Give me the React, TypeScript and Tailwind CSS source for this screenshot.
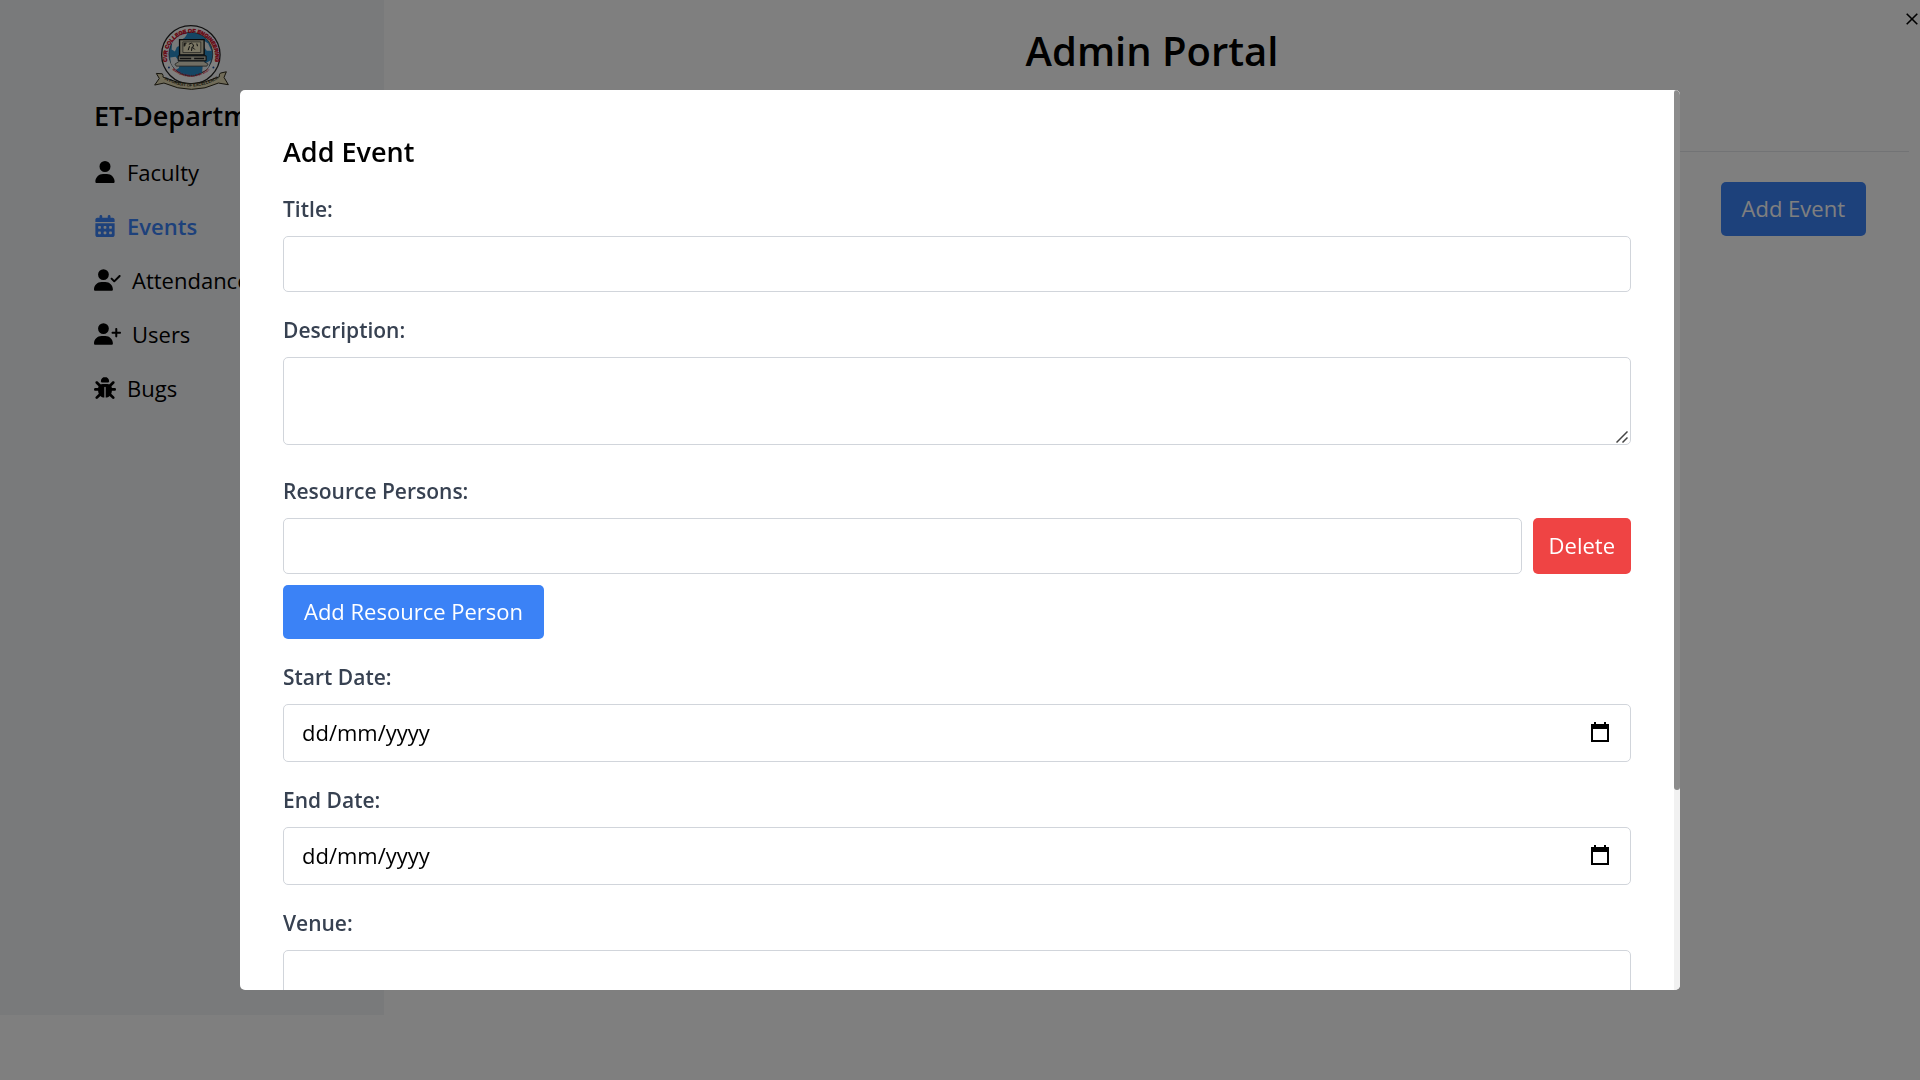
import React from "react";
import { FaUser, FaCalendarDays, FaUserCheck, FaUserPlus, FaBug } from "react-icons/fa6";

const fieldClass =
  "block w-full rounded-[5px] border border-[#d1d5db] bg-white px-[18px] text-[22px] leading-[32px] text-black placeholder:text-black placeholder:opacity-100 outline-none";
const labelClass = "mb-[11px] block text-[21px] leading-[32px] font-semibold text-[#374151]";
const primaryButtonClass =
  "block rounded-[5px] bg-[#3b82f6] px-[21px] pt-[10px] pb-[12px] text-[22px] leading-[32px] text-white";

function CollegeLogo() {
  return (
    <svg viewBox="40 28 235 200" className="h-[67px] w-[78px]" role="img" aria-label="College of Engineering crest">
      <defs>
        <path id="ring-top" d="M86 150A73 73 0 1 1 224 150" />
        <path id="ring-bottom" d="M92 160Q154 214 218 160" />
        <path id="motto" d="M72 192Q155 240 240 190" />
        <clipPath id="globe">
          <circle cx="154" cy="118" r="66" />
        </clipPath>
      </defs>
      <circle cx="154" cy="120" r="88" fill="#fff" stroke="#222" strokeWidth="4" />
      <circle cx="154" cy="118" r="66" fill="#2a8cc8" stroke="#222" strokeWidth="2" />
      <g clipPath="url(#globe)" fill="#eef3f5">
        <path d="M98 78l22-18 24-4-8 12-12 8 2 14-14 6-6 14-10-6z" />
        <path d="M92 128l16-2 14 16-4 18-10 6-14-18z" />
        <path d="M192 76l14 10 10 22-14 0-8-12z" />
        <path d="M190 150l24-14-8 26-18 10z" />
      </g>
      <path d="M120 74h74v46h-74z" fill="#d9d2b4" stroke="#111" strokeWidth="4" />
      <path d="M130 81h54v32h-54z" fill="#f4edc8" stroke="#333" strokeWidth="2" />
      <path d="M134 85v10M134 85h7M134 90h5M148 88l8-3 6 5-2 8 6 6M150 94l-4 12M158 96l-2 12M172 86l2 8" fill="none" stroke="#111" strokeWidth="3" />
      <path d="M116 123h84v15h-84z" fill="#c9c6b4" stroke="#111" strokeWidth="3" />
      <path d="M121 131h34M164 131h30" stroke="#222" strokeWidth="4" />
      <path d="M106 148l14-9h72l14 9-4 6h-92z" fill="#e0dcc8" stroke="#222" strokeWidth="2" />
      <circle cx="88" cy="158" r="3" fill="#1c4fa0" />
      <circle cx="222" cy="158" r="3" fill="#1c4fa0" />
      <text fill="#d0102a" stroke="#d0102a" strokeWidth="1.4" fontSize="16" fontWeight="700" fontFamily="Liberation Sans">
        <textPath href="#ring-top" startOffset="50%" textAnchor="middle">
          CVR COLLEGE OF ENGINEERING
        </textPath>
      </text>
      <text fill="#d0102a" fontSize="10" fontWeight="700" fontFamily="Liberation Sans">
        <textPath href="#ring-bottom" startOffset="50%" textAnchor="middle">
          MANGALPALLI, R.R. DIST.
        </textPath>
      </text>
      <path
        d="M50 176l18 1q4 6 2 10 84 40 170-1-2-6 3-11l18-4-7 17 13 22-30-5q-80 38-164 0l-28 6 14-20z"
        fill="#e2d9b2"
        stroke="#2a2718"
        strokeWidth="3"
      />
      <text fill="#1c1a10" fontSize="12" fontWeight="700" fontFamily="Liberation Sans">
        <textPath href="#motto" startOffset="50%" textAnchor="middle">
          IN PURSUIT OF EXCELLENCE
        </textPath>
      </text>
    </svg>
  );
}

const navItems = [
  { label: "Faculty", icon: FaUser, wide: false, active: false },
  { label: "Events", icon: FaCalendarDays, wide: false, active: true },
  { label: "Attendance", icon: FaUserCheck, wide: true, active: false },
  { label: "Users", icon: FaUserPlus, wide: true, active: false },
  { label: "Bugs", icon: FaBug, wide: false, active: false },
];

function Sidebar() {
  return (
    <aside className="h-[94vh] w-1/5 shrink-0 bg-gray-100 pt-[24px]">
      <div className="flex justify-center">
        <CollegeLogo />
      </div>
      <div className="pl-[94px]">
        <h2 className="mt-[6px] text-[27px] leading-[38px] font-semibold">ET-Department</h2>
        <nav className="mt-[21px] flex flex-col gap-[22px]">
          {navItems.map(({ label, icon: Icon, wide, active }) => (
            <a
              key={label}
              href="#"
              className={
                active
                  ? "flex items-center gap-[11px] text-[22px] leading-[32px] font-semibold text-[#3b82f6]"
                  : "flex items-center gap-[11px] text-[22px] leading-[32px]"
              }
            >
              <Icon className={wide ? "h-[22px] w-[27px]" : "h-[22px] w-[22px]"} />
              {label}
            </a>
          ))}
        </nav>
      </div>
    </aside>
  );
}

function DateField({ id, label }: { id: string; label: string }) {
  return (
    <div>
      <label htmlFor={id} className={labelClass}>
        {label}
      </label>
      <div className="relative">
        <input id={id} type="text" placeholder="dd/mm/yyyy" className={`${fieldClass} h-[58px] pb-[2px]`} />
        <button type="button" aria-label={`Pick ${label}`} className="absolute top-[18px] right-[21px]">
          <svg viewBox="0 0 20 21" className="h-[21px] w-[20px]">
            <path d="M4 0h2v2h8V0h2v2h3v18H1V2h3zM3 7v11h14V7z" fill="#000" fillRule="evenodd" />
          </svg>
        </button>
      </div>
    </div>
  );
}

function EventDialog() {
  return (
    <div
      role="dialog"
      aria-labelledby="dialog-title"
      className="flex h-5/6 w-3/4 overflow-hidden rounded-[5px] bg-white"
    >
      <div className="min-w-0 flex-1 overflow-y-auto p-[43px] [scrollbar-width:none]">
        <h2 id="dialog-title" className="mb-[22px] text-[27px] leading-[38px] font-semibold">
          Add Event
        </h2>
        <form className="flex flex-col gap-[22px] pb-[175px]">
          <div>
            <label htmlFor="title" className={labelClass}>Title:</label>
            <input id="title" type="text" className={`${fieldClass} h-[56px]`} />
          </div>
          <div className="mb-[8px]">
            <label htmlFor="description" className={labelClass}>Description:</label>
            <div className="relative">
              <textarea id="description" className={`${fieldClass} h-[88px] resize-none py-[11px]`} />
              <svg viewBox="0 0 12 12" className="pointer-events-none absolute right-[3px] bottom-[2px] h-[12px] w-[12px]">
                <path d="M0.5 11.5l11-11M6.5 11.5l5-5" stroke="#444" strokeWidth="1.5" />
              </svg>
            </div>
          </div>
          <div>
            <label htmlFor="person" className={labelClass}>Resource Persons:</label>
            <div className="mb-[11px] flex gap-[11px]">
              <input id="person" type="text" className={`${fieldClass} h-[56px]`} />
              <button type="button" className="shrink-0 rounded-[5px] bg-[#ef4444] px-[16px] pb-[2px] text-[22px] leading-[32px] text-white">
                Delete
              </button>
            </div>
            <button type="button" className={primaryButtonClass}>
              Add Resource Person
            </button>
          </div>
          <DateField id="start" label="Start Date:" />
          <DateField id="end" label="End Date:" />
          <div>
            <label htmlFor="venue" className={labelClass}>Venue:</label>
            <input id="venue" type="text" className={`${fieldClass} h-[56px]`} />
          </div>
        </form>
      </div>
      <div aria-hidden="true" className="w-[6px] shrink-0 bg-[#f1f1f1]">
        <div className="h-7/9 rounded-[5px] bg-[#8c8c8c]" />
      </div>
    </div>
  );
}

export default function App() {
  return (
    <div className="h-screen overflow-hidden bg-white font-['Open_Sans',sans-serif] text-black">
      <div className="flex">
        <Sidebar />
        <main className="min-w-0 flex-1">
          <h1 className="pt-[27px] text-center text-[40px] leading-[48px] font-semibold">Admin Portal</h1>
          <hr className="mx-[11px] mt-[76px] border-gray-200" />
          <div className="mt-[30px] mr-[54px] flex justify-end">
            <button type="button" className={primaryButtonClass}>
              Add Event
            </button>
          </div>
        </main>
      </div>
      <div className="fixed inset-0 flex items-center justify-center bg-black/50">
        <EventDialog />
        <button type="button" aria-label="Close" className="absolute top-[13px] right-[2px]">
          <svg viewBox="0 0 12 12" className="h-[12px] w-[12px]">
            <path d="M0.7 0.7l10.6 10.6M11.3 0.7L0.7 11.3" stroke="#000" strokeWidth="1.6" />
          </svg>
        </button>
      </div>
    </div>
  );
}
